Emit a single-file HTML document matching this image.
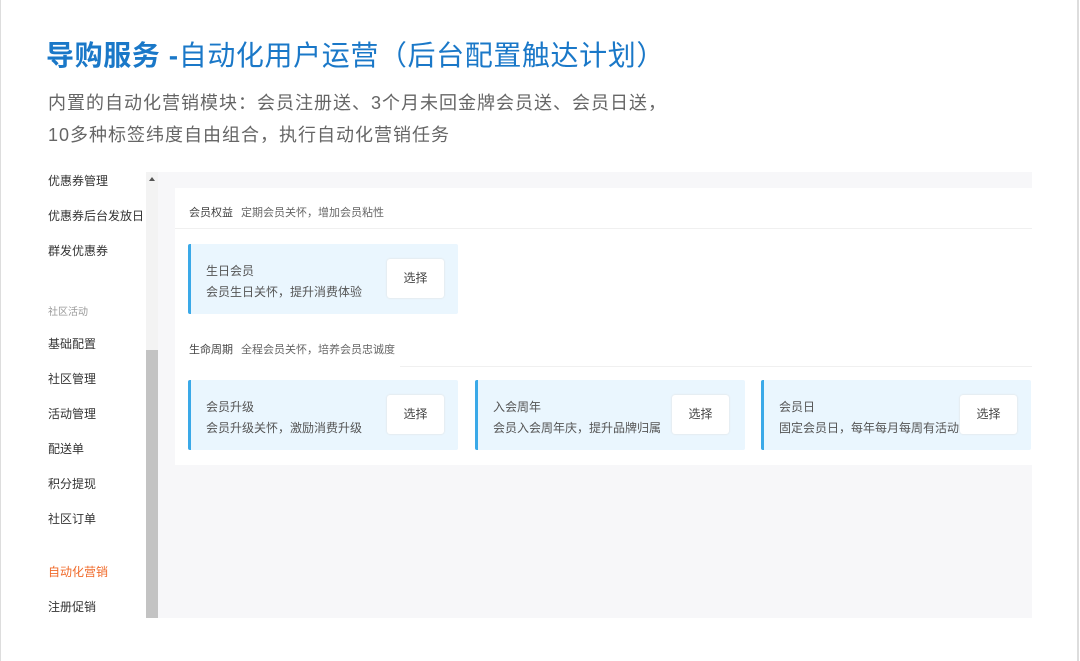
<!DOCTYPE html>
<html><head><meta charset="utf-8"><style>
*{margin:0;padding:0;box-sizing:border-box}
body{width:1080px;height:661px;background:#fff;font-family:"Liberation Sans","Noto Sans CJK SC",sans-serif;position:relative;overflow:hidden}
.a{position:absolute;white-space:nowrap}
.title{left:46px;top:38px;font-size:28px;color:#1a78c8;line-height:36px;letter-spacing:0.6px}
.title b{font-weight:bold}
.sub{left:48px;font-size:18px;color:#666;line-height:24px;letter-spacing:1px}
.nav{left:48px;font-size:12px;color:#333;line-height:16px}
.card{position:absolute;background:#eaf6fe;border-left:3px solid #3aa9e8;border-radius:2px;height:70px;width:270px}
.card .t{position:absolute;left:15px;top:18px;font-size:12px;color:#555}
.card .d{position:absolute;left:15px;top:39px;font-size:12px;color:#555}
.btn{position:absolute;top:15px;width:57px;height:39px;background:#fff;border-radius:3px;box-shadow:0 0 2px #ddd;font-size:12px;color:#444;text-align:center;line-height:39px}
.sec{left:189px;font-size:11px;color:#444}
.sec span{color:#666;margin-left:8px}
</style></head><body>
<div class="a" style="left:0;top:0;width:1px;height:661px;background:#ddd"></div>
<div class="a" style="left:1077px;top:0;width:2px;height:661px;background:#ddd"></div>
<div class="a title"><b>导购服务 -</b>自动化用户运营（后台配置触达计划）</div>
<div class="a sub" style="top:91px">内置的自动化营销模块：会员注册送、3个月未回金牌会员送、会员日送，</div>
<div class="a sub" style="top:123px">10多种标签纬度自由组合，执行自动化营销任务</div>

<div class="a nav" style="top:173px">优惠券管理</div>
<div class="a nav" style="top:208px">优惠券后台发放日</div>
<div class="a nav" style="top:243px">群发优惠券</div>
<div class="a nav" style="top:305px;font-size:10px;color:#999">社区活动</div>
<div class="a nav" style="top:336px">基础配置</div>
<div class="a nav" style="top:371px">社区管理</div>
<div class="a nav" style="top:406px">活动管理</div>
<div class="a nav" style="top:441px">配送单</div>
<div class="a nav" style="top:476px">积分提现</div>
<div class="a nav" style="top:511px">社区订单</div>
<div class="a nav" style="top:564px;color:#f06a2a">自动化营销</div>
<div class="a nav" style="top:599px">注册促销</div>

<div class="a" style="left:146px;top:172px;width:12px;height:446px;background:#f3f3f3"></div>
<div class="a" style="left:149px;top:177px;width:0;height:0;border-left:3px solid transparent;border-right:3px solid transparent;border-bottom:4px solid #555"></div>
<div class="a" style="left:146px;top:350px;width:12px;height:268px;background:#c3c3c3"></div>
<div class="a" style="left:158px;top:172px;width:874px;height:446px;background:#f7f7f9"></div>
<div class="a" style="left:175px;top:188px;width:857px;height:277px;background:#fff"></div>

<div class="a sec" style="top:204px">会员权益<span>定期会员关怀，增加会员粘性</span></div>
<div class="a" style="left:175px;top:228px;width:857px;height:1px;background:#f0f0f0"></div>
<div class="card" style="left:188px;top:244px"><div class="t">生日会员</div><div class="d">会员生日关怀，提升消费体验</div><div class="btn" style="left:196px">选择</div></div>

<div class="a sec" style="top:341px">生命周期<span>全程会员关怀，培养会员忠诚度</span></div>
<div class="a" style="left:400px;top:366px;width:632px;height:1px;background:#f0f0f0"></div>
<div class="card" style="left:188px;top:380px"><div class="t">会员升级</div><div class="d">会员升级关怀，激励消费升级</div><div class="btn" style="left:196px">选择</div></div>
<div class="card" style="left:475px;top:380px"><div class="t">入会周年</div><div class="d">会员入会周年庆，提升品牌归属</div><div class="btn" style="left:194px">选择</div></div>
<div class="card" style="left:761px;top:380px"><div class="t">会员日</div><div class="d">固定会员日，每年每月每周有活动</div><div class="btn" style="left:196px">选择</div></div>
</body></html>
